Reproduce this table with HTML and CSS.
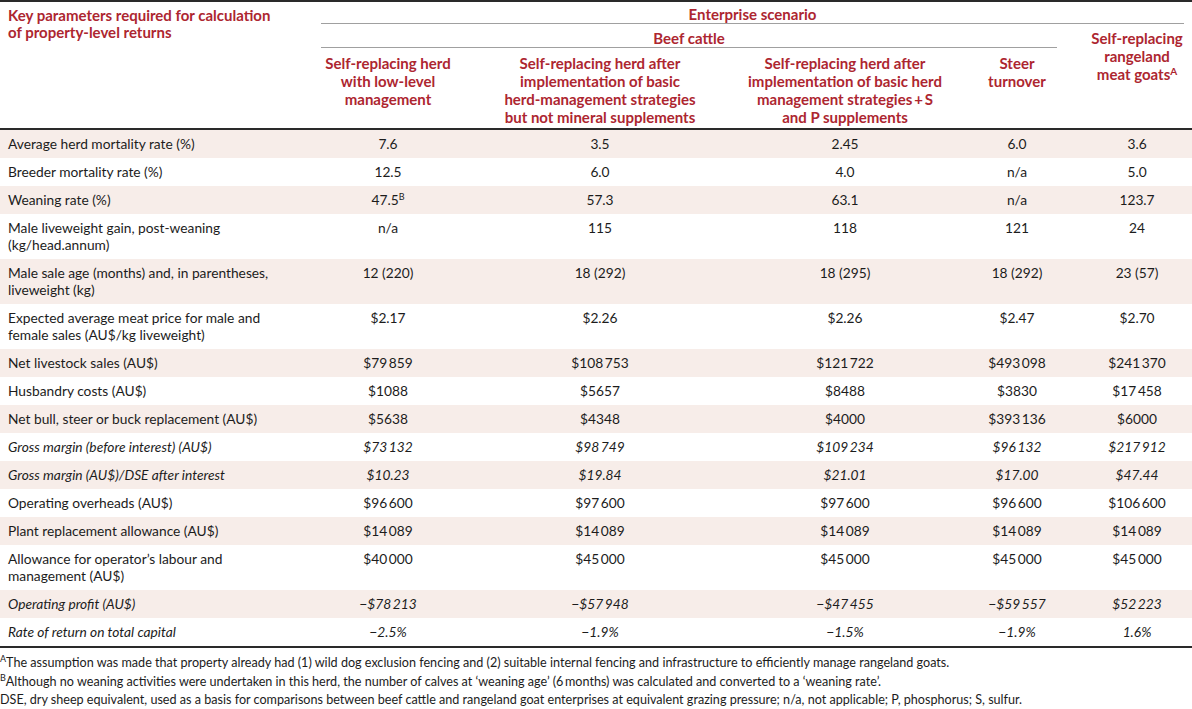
FILE: index.html
```html
<!DOCTYPE html>
<html lang="en">
<head>
<meta charset="utf-8">
<title>Key parameters</title>
<link rel="stylesheet" href="styles.css">
</head>
<body>
<div class="wrap">
<table class="tbl">
  <colgroup>
    <col class="c1"><col class="c2"><col class="c3"><col class="c4"><col class="c5"><col class="c6">
  </colgroup>
  <thead>
    <tr>
      <th class="key hb" rowspan="3">Key parameters required for calculation<br>of property-level returns</th>
      <th class="ent" colspan="5"><div class="ul">Enterprise scenario</div></th>
    </tr>
    <tr>
      <th class="beef" colspan="4"><div class="ul">Beef cattle</div></th>
      <th class="goat hb" rowspan="2">Self-replacing<br>rangeland<br>meat goats<sup>A</sup></th>
    </tr>
    <tr>
      <th class="sub hb">Self-replacing herd<br>with low-level<br>management</th>
      <th class="sub hb">Self-replacing herd after<br>implementation of basic<br>herd-management strategies<br>but not mineral supplements</th>
      <th class="sub hb">Self-replacing herd after<br>implementation of basic herd<br>management strategies&#8201;+&#8201;S<br>and P supplements</th>
      <th class="sub s5 hb">Steer<br>turnover</th>
    </tr>
  </thead>
  <tbody>
    <tr><td>Average herd mortality rate (%)</td><td>7.6</td><td>3.5</td><td>2.45</td><td class="s5">6.0</td><td class="g">3.6</td></tr>
    <tr><td>Breeder mortality rate (%)</td><td>12.5</td><td>6.0</td><td>4.0</td><td class="s5">n/a</td><td class="g">5.0</td></tr>
    <tr><td>Weaning rate (%)</td><td>47.5<sup>B</sup></td><td>57.3</td><td>63.1</td><td class="s5">n/a</td><td class="g">123.7</td></tr>
    <tr class="two"><td>Male liveweight gain, post-weaning<br>(kg/head.annum)</td><td>n/a</td><td>115</td><td>118</td><td class="s5">121</td><td class="g">24</td></tr>
    <tr class="two"><td>Male sale age (months) and, in parentheses,<br>liveweight (kg)</td><td>12 (220)</td><td>18 (292)</td><td>18 (295)</td><td class="s5">18 (292)</td><td class="g">23 (57)</td></tr>
    <tr class="two"><td>Expected average meat price for male and<br>female sales (AU$/kg liveweight)</td><td>$2.17</td><td>$2.26</td><td>$2.26</td><td class="s5">$2.47</td><td class="g">$2.70</td></tr>
    <tr><td>Net livestock sales (AU$)</td><td>$79&#8201;859</td><td>$108&#8201;753</td><td>$121&#8201;722</td><td class="s5">$493&#8201;098</td><td class="g">$241&#8201;370</td></tr>
    <tr><td>Husbandry costs (AU$)</td><td>$1088</td><td>$5657</td><td>$8488</td><td class="s5">$3830</td><td class="g">$17&#8201;458</td></tr>
    <tr><td>Net bull, steer or buck replacement (AU$)</td><td>$5638</td><td>$4348</td><td>$4000</td><td class="s5">$393&#8201;136</td><td class="g">$6000</td></tr>
    <tr class="it"><td>Gross margin (before interest) (AU$)</td><td>$73&#8201;132</td><td>$98&#8201;749</td><td>$109&#8201;234</td><td class="s5">$96&#8201;132</td><td class="g">$217&#8201;912</td></tr>
    <tr class="it"><td>Gross margin (AU$)/DSE after interest</td><td>$10.23</td><td>$19.84</td><td>$21.01</td><td class="s5">$17.00</td><td class="g">$47.44</td></tr>
    <tr><td>Operating overheads (AU$)</td><td>$96&#8201;600</td><td>$97&#8201;600</td><td>$97&#8201;600</td><td class="s5">$96&#8201;600</td><td class="g">$106&#8201;600</td></tr>
    <tr><td>Plant replacement allowance (AU$)</td><td>$14&#8201;089</td><td>$14&#8201;089</td><td>$14&#8201;089</td><td class="s5">$14&#8201;089</td><td class="g">$14&#8201;089</td></tr>
    <tr class="two"><td>Allowance for operator’s labour and<br>management (AU$)</td><td>$40&#8201;000</td><td>$45&#8201;000</td><td>$45&#8201;000</td><td class="s5">$45&#8201;000</td><td class="g">$45&#8201;000</td></tr>
    <tr class="it"><td>Operating profit (AU$)</td><td>−$78&#8201;213</td><td>−$57&#8201;948</td><td>−$47&#8201;455</td><td class="s5">−$59&#8201;557</td><td class="g">$52&#8201;223</td></tr>
    <tr class="it"><td>Rate of return on total capital</td><td>−2.5%</td><td>−1.9%</td><td>−1.5%</td><td class="s5">−1.9%</td><td class="g">1.6%</td></tr>
  </tbody>
</table>
<div class="notes">
  <p><sup>A</sup>The assumption was made that property already had (1) wild dog exclusion fencing and (2) suitable internal fencing and infrastructure to efficiently manage rangeland goats.</p>
  <p><sup>B</sup>Although no weaning activities were undertaken in this herd, the number of calves at ‘weaning age’ (6&#8201;months) was calculated and converted to a ‘weaning rate’.</p>
  <p>DSE, dry sheep equivalent, used as a basis for comparisons between beef cattle and rangeland goat enterprises at equivalent grazing pressure; n/a, not applicable; P, phosphorus; S, sulfur.</p>
</div>
</div>
</body>
</html>
```
FILE: styles.css
```css
html, body {
  margin: 0;
  padding: 0;
  background: #ffffff;
}
body {
  font-family: Lato, "Open Sans", "Liberation Sans", sans-serif;
  font-size: 13.75px;
  color: #1c1c1c;
}
.wrap {
  width: 1192px;
  border-top: 2px solid #2a2a2a;
}
.tbl {
  width: 1192px;
  border-collapse: separate;
  border-spacing: 0;
  table-layout: fixed;
}
.c1 { width: 296px; }
.c2 { width: 184px; }
.c3 { width: 240px; }
.c4 { width: 250px; }
.c5 { width: 94px; }
.c6 { width: 128px; }

th {
  color: #ad2630;
  font-weight: 700;
  font-size: 15px;
  line-height: 18px;
  vertical-align: top;
  text-align: center;
  padding: 0;
  white-space: nowrap;
}
th.hb {
  border-bottom: 2px solid #2a2a2a;
}
th.key {
  text-align: left;
  padding: 5px 8px 0 8px;
  line-height: 17px;
}
th.ent {
  padding: 3px 8px 0 25px;
}
th.beef {
  padding: 5px 7px 0 25px;
}
.ul {
  border-bottom: 1px solid #a0a0a0;
}
th.sub {
  padding: 6px 4px 2px 4px;
}
th.goat {
  padding: 5px 0 0 18px;
}
th.s5 {
  padding-left: 4px;
  padding-right: 4px;
}
sup {
  font-size: 9px;
  line-height: 0;
  vertical-align: 5px;
}
th sup {
  font-size: 10px;
}

td {
  padding: 5px 8px 6px 8px;
  line-height: 17px;
  vertical-align: top;
  text-align: center;
  white-space: nowrap;
}
td:first-child {
  text-align: left;
}
td.g {
  padding-left: 18px;
  padding-right: 0;
}
td.s5 {
  padding-left: 4px;
  padding-right: 4px;
}
tbody tr:nth-child(odd) td {
  background: #f7ede9;
}
tr.it td {
  font-style: italic;
}

.notes {
  border-top: 2px solid #2a2a2a;
  padding-top: 6px;
  font-size: 12.6px;
}
.notes p {
  margin: 0;
  line-height: 18.5px;
  white-space: nowrap;
}
```
